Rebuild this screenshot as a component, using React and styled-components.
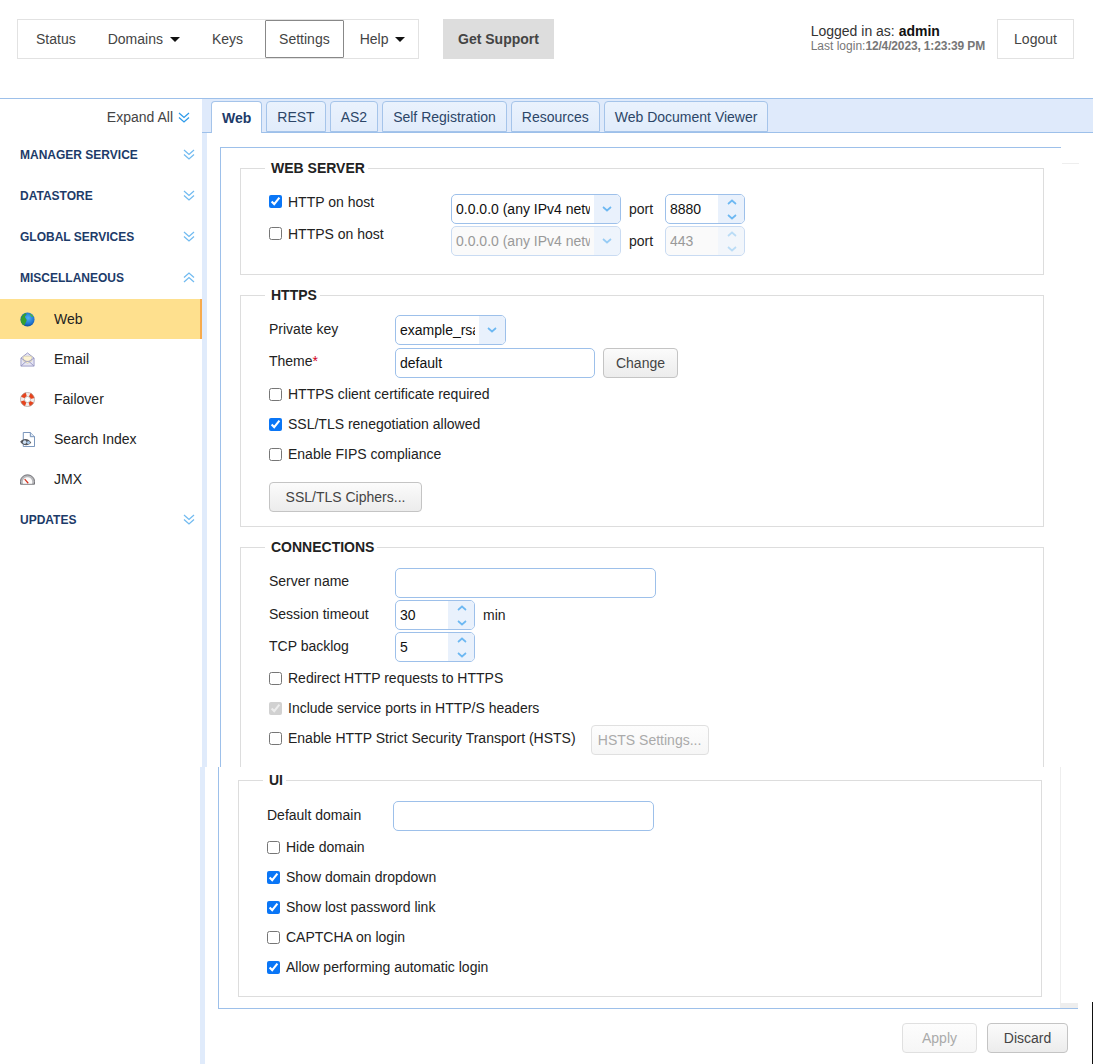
import React from 'react';
import styled, { createGlobalStyle } from 'styled-components';

const GlobalStyle = createGlobalStyle`
  html, body {
    margin: 0;
    height: 1064px;
    overflow: hidden;
    background: #fff;
  }
  body, input, button {
    font-family: "Liberation Sans", Arial, sans-serif;
    font-size: 14px;
  }
`;

const Page = styled.div`
  width: 1093px;
  height: 1064px;
  overflow: hidden;
  color: #222;
`;

/* header */
const Header = styled.header`
  height: 99px;
  box-sizing: border-box;
  border-bottom: 1px solid #9dc0ea;
  display: flex;
  align-items: flex-start;
  padding: 19px 19px 0 17px;
`;

const Nav = styled.nav`
  display: flex;
  align-items: center;
  gap: 4px;
  height: 40px;
  box-sizing: border-box;
  padding-left: 4px;
  width: 402px;
  border: 1px solid #e2e2e2;
`;

const NavItem = styled.div`
  display: flex;
  align-items: center;
  gap: 7px;
  height: 38px;
  box-sizing: border-box;
  padding: 0 13px;
  color: #444;
  border: 1px solid ${p => (p.$active ? '#888' : 'transparent')};
  border-radius: 1px;
  margin: ${p => (p.$active ? '0 -2px 0 4px' : '0')};
`;

const Caret = styled.span`
  width: 0;
  height: 0;
  border-left: 5px solid transparent;
  border-right: 5px solid transparent;
  border-top: 5px solid #111;
`;

const Support = styled.div`
  margin-left: 24px;
  width: 111px;
  height: 40px;
  background: #ddd;
  color: #444;
  font-weight: bold;
  display: flex;
  align-items: center;
  justify-content: center;
`;

const Who = styled.div`
  margin-left: auto;
  margin-top: 5px;
  line-height: 14px;
  color: #333;
  b { color: #111; }
`;

const LastLogin = styled.div`
  margin-top: 2px;
  font-size: 12px;
  line-height: 13px;
  color: #777;
`;

const LoginDate = styled.span`
  font-weight: bold;
  letter-spacing: -0.15px;
`;

const Logout = styled.div`
  margin-left: 12px;
  width: 77px;
  height: 40px;
  box-sizing: border-box;
  border: 1px solid #e2e2e2;
  color: #444;
  display: flex;
  align-items: center;
  justify-content: center;
`;

/* page body */
const Body = styled.div`
  display: flex;
  height: 965px;
`;

const Sidebar = styled.aside`
  width: 202px;
  flex: none;
`;

const ExpandRow = styled.div`
  height: 36px;
  display: flex;
  align-items: center;
  justify-content: flex-end;
  gap: 5px;
  padding-right: 12px;
  color: #444;
`;

const GroupHead = styled.div`
  height: 41px;
  box-sizing: border-box;
  display: flex;
  align-items: center;
  justify-content: space-between;
  padding: 0 7px ${p => (p.$low ? 0 : 2)}px 20px;
  font-size: 12px;
  font-weight: bold;
  color: #1d3b69;
`;

const MenuItem = styled.div`
  height: 40px;
  box-sizing: border-box;
  display: flex;
  align-items: center;
  gap: 19px;
  padding-left: 20px;
  color: #222;
  background: ${p => (p.$active ? '#fee08e' : 'transparent')};
  border-right: 2px solid ${p => (p.$active ? '#f7ab4d' : 'transparent')};
`;

const Main = styled.main`
  flex: 1;
  min-width: 0;
`;

const TabBar = styled.div`
  height: 34px;
  box-sizing: border-box;
  background: #dfeafb;
  border-bottom: 1px solid #9dc0ea;
  display: flex;
  align-items: flex-end;
  gap: 4px;
  padding-left: 9px;
`;

const Tab = styled.div`
  height: ${p => (p.$active ? '32px' : '31px')};
  margin-bottom: ${p => (p.$active ? '-1px' : '0')};
  box-sizing: border-box;
  padding: 0 10px;
  display: flex;
  align-items: center;
  border: 1px solid #a5c4ea;
  border-bottom: ${p => (p.$active ? 'none' : '1px solid #a5c4ea')};
  border-radius: 4px 4px 0 0;
  background: ${p => (p.$active ? '#fff' : 'linear-gradient(#eaf2fd, #e1ecfb)')};
  color: ${p => (p.$active ? '#1d3b69' : '#2c4668')};
  font-weight: ${p => (p.$active ? 'bold' : 'normal')};
`;

const TopPane = styled.div`
  position: relative;
  height: 634px;
  box-sizing: border-box;
  border-left: 5px solid #e0ebfb;
  padding: 14px 0 0 13px;

  &::after {
    content: '';
    position: absolute;
    left: 855px;
    top: 30px;
    width: 17px;
    height: 1px;
    background: #eee;
  }
`;

const TopScroll = styled.div`
  width: 841px;
  height: 620px;
  box-sizing: border-box;
  border-left: 1px solid #9dc0ea;
  border-top: 1px solid #9dc0ea;
  padding: 12px 0 0 19px;
  overflow: hidden;
`;

const BottomPane = styled.div`
  position: relative;
  margin-left: -2px;
  border-left: 5px solid #e0ebfb;
  padding-left: 13px;
  height: 297px;

  &::after {
    content: '';
    position: absolute;
    right: 0;
    top: 235px;
    width: 1px;
    height: 62px;
    background: #111;
  }
`;

const BottomScroll = styled.div`
  width: 860px;
  height: 242px;
  box-sizing: border-box;
  display: flex;
  border-left: 1px solid #9dc0ea;
  border-bottom: 1px solid #9dc0ea;
`;

const BottomContent = styled.div`
  width: 841px;
  flex: none;
  box-sizing: border-box;
  padding: 5px 0 0 19px;
`;

const Track = styled.div`
  flex: 1;
  border-left: 1px solid #eee;
  display: flex;
  align-items: flex-end;
`;

const TrackCorner = styled.div`
  width: 100%;
  height: 5px;
  background: #eee;
`;

const Footer = styled.div`
  display: flex;
  justify-content: flex-end;
  gap: 10px;
  padding: 14px 25px 0 0;
`;

/* form parts */
const Section = styled.fieldset`
  width: 804px;
  box-sizing: border-box;
  margin: 0 0 12px;
  padding: ${p => p.$top}px 0 ${p => p.$bottom}px 28px;
  border: 1px solid #ddd;
  min-inline-size: 0;
`;

const Title = styled.legend`
  margin-left: -4px;
  padding: 0 3px 0 6px;
  font-weight: bold;
  line-height: 16px;
  color: #222;
`;

const Host = styled.div`
  display: grid;
  grid-template-columns: 182px 170px 44px 80px;
  grid-auto-rows: 30px;
  row-gap: 2px;
  align-items: center;
`;

const Row = styled.div`
  display: flex;
  align-items: center;
  height: 30px;
  margin-bottom: ${p => p.$gap ?? 2}px;
`;

const Label = styled.div`
  width: 126px;
  flex: none;
  color: #222;
  margin-top: ${p => (p.$lift ? -5 : -3)}px;
  em { color: #d0021b; font-style: normal; }
`;

const Unit = styled.span`
  padding-left: 8px;
  color: #222;
`;

const Check = styled.label`
  display: flex;
  align-items: center;
  gap: 6px;
  height: ${p => (p.$tall ? '30px' : 'auto')};
  color: #222;
  ${p => p.$raise && `margin-top: -${p.$raise}px;`}

  input {
    margin: 0;
    width: 13px;
    height: 13px;
    accent-color: #0a76f6;
  }
`;

const CheckLine = styled.div`
  display: flex;
  height: 30px;
  align-items: center;
`;

const Field = styled.input`
  width: ${p => p.$width}px;
  height: 30px;
  box-sizing: border-box;
  padding: 0 4px;
  border: 1px solid #9dc0ea;
  border-radius: 5px;
  color: #111;
  outline: none;
`;

const Combo = styled.div`
  width: ${p => p.$width}px;
  height: 30px;
  box-sizing: border-box;
  display: flex;
  border: 1px solid ${p => (p.$off ? '#c9dbf2' : '#9dc0ea')};
  border-radius: 5px;
  overflow: hidden;
  background: ${p => (p.$off ? '#fafafa' : '#fff')};
  color: ${p => (p.$off ? '#999' : '#111')};
`;

const ComboText = styled.div`
  flex: 1;
  min-width: 0;
  margin: 0 4px;
  line-height: 28px;
  white-space: nowrap;
  overflow: hidden;
`;

const ComboArrow = styled.div`
  width: 26px;
  flex: none;
  background: #e9f1fc;
  display: flex;
  align-items: center;
  justify-content: center;
  opacity: ${p => (p.$off ? 0.7 : 1)};
`;

const SpinArrows = styled.div`
  width: 26px;
  flex: none;
  box-sizing: border-box;
  padding-left: 2px;
  background: #e9f1fc;
  display: flex;
  flex-direction: column;
  align-items: center;
  justify-content: center;
  gap: 9px;
  opacity: ${p => (p.$off ? 0.45 : 1)};
`;

const Button = styled.div`
  height: 30px;
  width: ${p => p.$width}px;
  box-sizing: border-box;
  display: flex;
  align-items: center;
  justify-content: center;
  border: 1px solid ${p => (p.$off ? '#e0e0e0' : '#c4c4c4')};
  border-radius: 4px;
  background: ${p => (p.$off ? 'linear-gradient(#fdfdfd, #f6f6f6)' : 'linear-gradient(#fbfbfb, #ececec)')};
  color: ${p => (p.$off ? '#aaa' : '#444')};
  margin: ${p => p.$margin || '0'};
  flex: none;
`;

/* icons */
const Chevron = ({ up, color = '#6db8f2' }) => (
  <svg width="10" height="6" viewBox="0 0 10 6" fill="none" stroke={color} strokeWidth="1.7">
    <polyline points={up ? '1,5 5,1.5 9,5' : '1,1 5,4.5 9,1'} />
  </svg>
);

const DoubleChevron = ({ up, color = '#72bbf0' }) => (
  <svg width="12" height="11" viewBox="0 0 12 11" fill="none" stroke={color} strokeWidth="1.3">
    {up ? (
      <>
        <polyline points="1,5.5 6,1 11,5.5" />
        <polyline points="1,10 6,5.5 11,10" />
      </>
    ) : (
      <>
        <polyline points="1,1 6,5.5 11,1" />
        <polyline points="1,5.5 6,10 11,5.5" />
      </>
    )}
  </svg>
);

const Globe = () => (
  <svg width="15" height="15" viewBox="0 0 16 16">
    <defs>
      <radialGradient id="sea" cx="0.55" cy="0.4" r="0.65">
        <stop offset="0" stopColor="#4fb0f5" />
        <stop offset="0.65" stopColor="#1f74cf" />
        <stop offset="1" stopColor="#0c3f8c" />
      </radialGradient>
    </defs>
    <circle cx="8" cy="8" r="7.5" fill="url(#sea)" />
    <path d="M1 10C.4 6.500 2.500 2.500 6 1.200c1.500.6 1 2-.2 2.800-1 .8-.6 2 .4 2.800 1 1 1.200 2.500.2 3.800-.5 1-1 2.400-1.500 3.500C2.800 13.500 1.500 12 1 10z" fill="#35a02f" />
    <path d="M10 1.500c2 .6 3.500 2 4.200 3.500-1 .6-2.200 0-2.500-.8-.4-.8-1.400-1.400-1.700-2.700z" fill="#4fb53c" />
  </svg>
);

const Envelope = () => (
  <svg width="15" height="15" viewBox="0 0 16 16">
    <path d="M1 6.500 8 1l7 5.500V15H1z" fill="#e6e5f4" stroke="#9a9ac4" />
    <path d="M3.500 4.500h9v5l-4.500 2.500-4.500-2.500z" fill="#fdf3d2" stroke="#c9c3a2" strokeWidth="0.6" />
    <path d="M1 15l5.500-5h3L15 15M1 6.500l5.500 3.500M15 6.500L9.500 10" fill="none" stroke="#9a9ac4" />
  </svg>
);

const Lifebuoy = () => (
  <svg width="15" height="15" viewBox="0 0 16 16">
    <circle cx="8" cy="8" r="5.400" fill="none" stroke="#f3ecea" strokeWidth="4.400" />
    <circle
      cx="8"
      cy="8"
      r="5.400"
      fill="none"
      stroke="#e8431c"
      strokeWidth="4.400"
      strokeDasharray="5 3.480"
      strokeDashoffset="2.500"
      transform="rotate(45 8 8)"
    />
    <circle cx="8" cy="8" r="7.500" fill="none" stroke="#a89a94" strokeWidth="0.7" />
    <circle cx="8" cy="8" r="3.200" fill="#fff" stroke="#a89a94" strokeWidth="0.7" />
  </svg>
);

const SearchDoc = () => (
  <svg width="15" height="15" viewBox="0 0 16 16">
    <path d="M3.500.5h7.500l4.500 4.500v10.500H3.500z" fill="#fff" stroke="#6f8db5" />
    <path d="M11 .5V5h4.500" fill="#dfe8f4" stroke="#6f8db5" />
    <path d="M.2 10.500C2 8.200 4 7.300 6 7.500c2.500.2 4.500 1.700 6 3.800-1.500 1.800-3.500 2.900-5.500 2.900-2.500 0-4.800-1.500-6.300-3.700z" fill="#55585f" />
    <circle cx="5" cy="10.800" r="1.900" fill="#cfe0f2" />
    <circle cx="9" cy="11.300" r="1.700" fill="#a9c7e6" />
  </svg>
);

const Gauge = () => (
  <svg width="15" height="15" viewBox="0 0 16 16">
    <path d="M.5 13V10a7.500 7 0 0 1 15 0v3z" fill="#b9b9bc" stroke="#6d6d72" />
    <path d="M3 12.500V10.300a5 4.800 0 0 1 10 0v2.200z" fill="#fbfbfb" />
    <path d="M5 7.500 8.800 12" stroke="#d3301c" strokeWidth="1.300" />
  </svg>
);

const Spin = ({ value, off }) => (
  <Combo $width={80} $off={off}>
    <ComboText>{value}</ComboText>
    <SpinArrows $off={off}>
      <Chevron up />
      <Chevron />
    </SpinArrows>
  </Combo>
);

const Select = ({ value, width, off }) => (
  <Combo $width={width} $off={off}>
    <ComboText>{value}</ComboText>
    <ComboArrow $off={off}>
      <Chevron />
    </ComboArrow>
  </Combo>
);

const CheckBox = ({ label, checked, disabled, tall, raise }) => (
  <Check $tall={tall} $raise={raise}>
    <input type="checkbox" readOnly checked={!!checked} disabled={!!disabled} />
    {label}
  </Check>
);

const misc = [
  { name: 'Web', icon: <Globe />, active: true },
  { name: 'Email', icon: <Envelope /> },
  { name: 'Failover', icon: <Lifebuoy /> },
  { name: 'Search Index', icon: <SearchDoc /> },
  { name: 'JMX', icon: <Gauge /> },
];

const tabs = ['Web', 'REST', 'AS2', 'Self Registration', 'Resources', 'Web Document Viewer'];

export default function App() {
  return (
    <Page>
      <GlobalStyle />
      <Header>
        <Nav>
          <NavItem>Status</NavItem>
          <NavItem>
            Domains <Caret />
          </NavItem>
          <NavItem>Keys</NavItem>
          <NavItem $active>Settings</NavItem>
          <NavItem>
            Help <Caret />
          </NavItem>
        </Nav>
        <Support>Get Support</Support>
        <Who>
          Logged in as: <b>admin</b>
          <LastLogin>
            Last login:<LoginDate>12/4/2023, 1:23:39 PM</LoginDate>
          </LastLogin>
        </Who>
        <Logout>Logout</Logout>
      </Header>

      <Body>
        <Sidebar>
          <ExpandRow>
            Expand All <DoubleChevron color="#2f9bea" />
          </ExpandRow>
          <GroupHead>
            MANAGER SERVICE <DoubleChevron />
          </GroupHead>
          <GroupHead>
            DATASTORE <DoubleChevron />
          </GroupHead>
          <GroupHead>
            GLOBAL SERVICES <DoubleChevron />
          </GroupHead>
          <GroupHead>
            MISCELLANEOUS <DoubleChevron up />
          </GroupHead>
          {misc.map(item => (
            <MenuItem key={item.name} $active={item.active}>
              {item.icon}
              {item.name}
            </MenuItem>
          ))}
          <GroupHead $low>
            UPDATES <DoubleChevron />
          </GroupHead>
        </Sidebar>

        <Main>
          <TabBar>
            {tabs.map((tab, i) => (
              <Tab key={tab} $active={i === 0}>
                {tab}
              </Tab>
            ))}
          </TabBar>

          <TopPane>
            <TopScroll>
              <Section $top={18} $bottom={18}>
                <Title>WEB SERVER</Title>
                <Host>
                  <CheckBox label="HTTP on host" checked raise={15} />
                  <Select value="0.0.0.0 (any IPv4 network)" width={170} />
                  <Unit>port</Unit>
                  <Spin value="8880" />
                  <CheckBox label="HTTPS on host" raise={15} />
                  <Select value="0.0.0.0 (any IPv4 network)" width={170} off />
                  <Unit>port</Unit>
                  <Spin value="443" off />
                </Host>
              </Section>

              <Section $top={12} $bottom={14}>
                <Title>HTTPS</Title>
                <Row $gap={3}>
                  <Label>Private key</Label>
                  <Select value="example_rsa" width={111} />
                </Row>
                <Row $gap={1}>
                  <Label $lift>
                    Theme<em>*</em>
                  </Label>
                  <Field readOnly value="default" $width={200} />
                  <Button $width={75} $margin="0 0 0 8px">
                    Change
                  </Button>
                </Row>
                <CheckBox label="HTTPS client certificate required" tall />
                <CheckBox label="SSL/TLS renegotiation allowed" checked tall />
                <CheckBox label="Enable FIPS compliance" tall />
                <Button $width={153} $margin="13px 0 0">
                  SSL/TLS Ciphers...
                </Button>
              </Section>

              <Section $top={13} $bottom={40}>
                <Title>CONNECTIONS</Title>
                <Row>
                  <Label $lift>Server name</Label>
                  <Field readOnly value="" $width={261} />
                </Row>
                <Row>
                  <Label>Session timeout</Label>
                  <Spin value="30" />
                  <Unit>min</Unit>
                </Row>
                <Row $gap={1}>
                  <Label>TCP backlog</Label>
                  <Spin value="5" />
                </Row>
                <CheckBox label="Redirect HTTP requests to HTTPS" tall />
                <CheckBox label="Include service ports in HTTP/S headers" checked disabled tall />
                <CheckLine>
                  <CheckBox label="Enable HTTP Strict Security Transport (HSTS)" />
                  <Button $off $width={118} $margin="4px 0 0 15px">
                    HSTS Settings...
                  </Button>
                </CheckLine>
              </Section>
            </TopScroll>
          </TopPane>

          <BottomPane>
            <BottomScroll>
              <BottomContent>
                <Section $top={13} $bottom={14}>
                  <Title>UI</Title>
                  <Row $gap={1}>
                    <Label>Default domain</Label>
                    <Field readOnly value="" $width={261} />
                  </Row>
                  <CheckBox label="Hide domain" tall />
                  <CheckBox label="Show domain dropdown" checked tall />
                  <CheckBox label="Show lost password link" checked tall />
                  <CheckBox label="CAPTCHA on login" tall />
                  <CheckBox label="Allow performing automatic login" checked tall />
                </Section>
              </BottomContent>
              <Track>
                <TrackCorner />
              </Track>
            </BottomScroll>
            <Footer>
              <Button $off $width={75}>
                Apply
              </Button>
              <Button $width={81}>Discard</Button>
            </Footer>
          </BottomPane>
        </Main>
      </Body>
    </Page>
  );
}
